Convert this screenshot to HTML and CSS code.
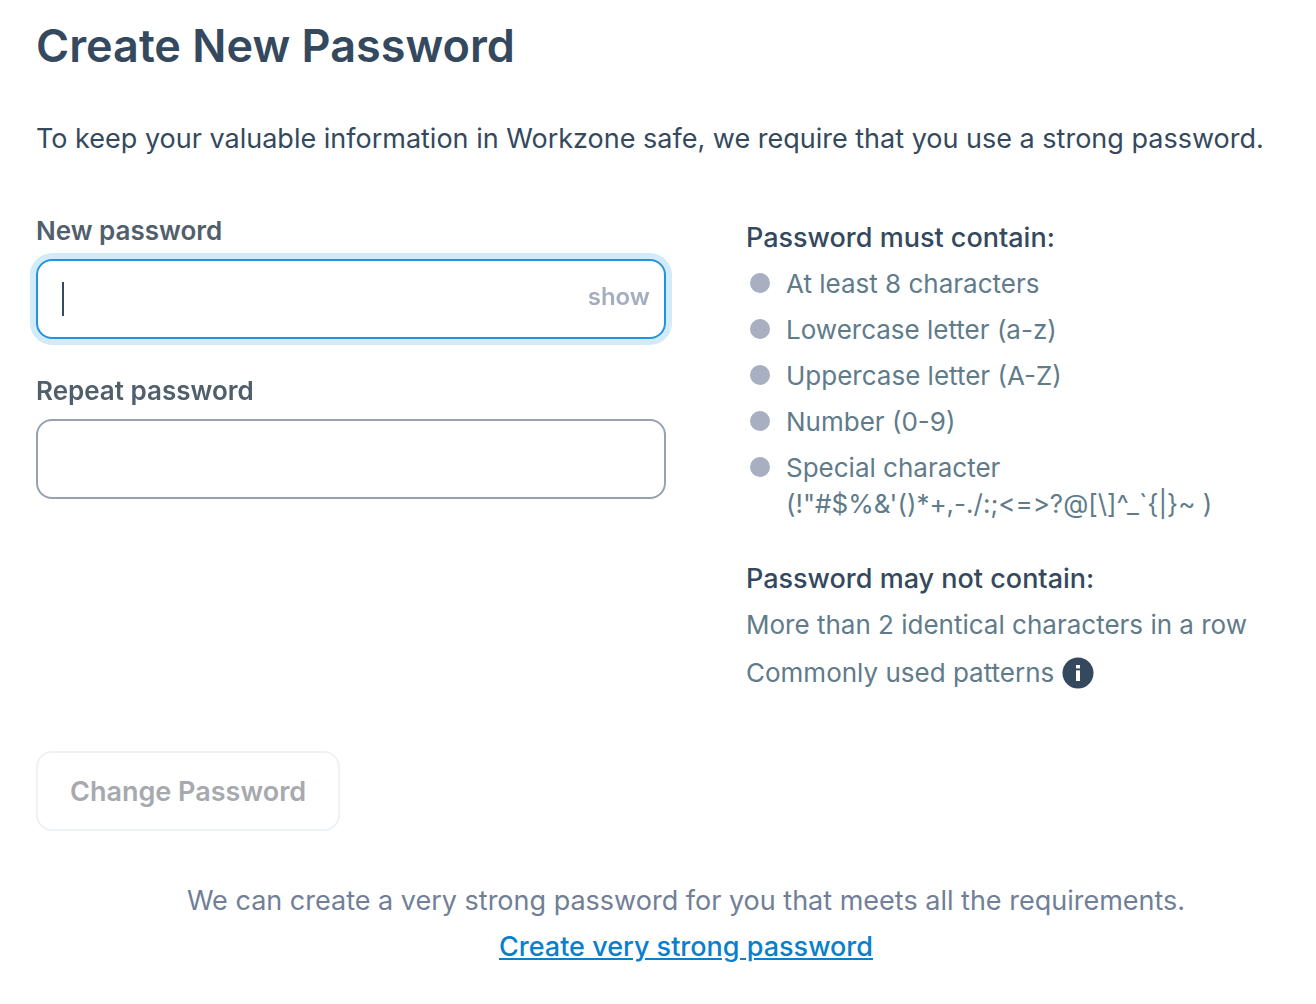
FILE: index.html
```html
<!DOCTYPE html>
<html lang="en">

<head>
    <meta charset="UTF-8">
    <meta name="viewport" content="width=device-width, initial-scale=1.0">
    <title>Create New Password</title>
    <link rel="stylesheet" href="styles.css">
</head>

<body>
    <main class="page">
        <h1>Create New Password</h1>
        <p class="intro">To keep your valuable information in Workzone safe, we require that you use a strong password.</p>

        <form class="password-form">
            <div class="columns">
                <div class="fields">
                    <div class="field">
                        <label for="newPassword">New password</label>
                        <div class="input-box">
                            <input type="password" id="newPassword" placeholder=" " autocomplete="new-password" autofocus>
                            <button type="button" id="showBtn" class="show-btn">show</button>
                        </div>
                    </div>
                    <div class="field">
                        <label for="repeatPassword">Repeat password</label>
                        <div class="input-box">
                            <input type="password" id="repeatPassword" placeholder=" " autocomplete="new-password">
                        </div>
                    </div>
                </div>

                <div class="rules">
                    <h2>Password must contain:</h2>
                    <ul class="must">
                        <li><span>At least 8 characters</span></li>
                        <li><span>Lowercase letter (a-z)</span></li>
                        <li><span>Uppercase letter (A-Z)</span></li>
                        <li><span>Number (0-9)</span></li>
                        <li><span>Special character<br><span class="symbols">(!"#$%&amp;'()*+,-./:;&lt;=&gt;?@[\]^_`{|}~ )</span></span></li>
                    </ul>
                    <h2>Password may not contain:</h2>
                    <ul class="must-not">
                        <li>More than 2 identical characters in a row</li>
                        <li class="patterns">Commonly used patterns
                            <svg class="info" viewBox="0 0 32 32" aria-hidden="true">
                                <circle cx="16" cy="16" r="15.5" />
                                <rect x="14" y="8" width="4" height="3.4" />
                                <rect x="14" y="13.4" width="4" height="10.6" />
                            </svg>
                        </li>
                    </ul>
                </div>
            </div>

            <button type="submit" class="submit-btn" disabled>Change Password</button>
        </form>

        <div class="suggest">
            <p>We can create a very strong password for you that meets all the requirements.</p>
            <a href="#">Create very strong password</a>
        </div>
    </main>

    <script>
document.getElementById('showBtn').addEventListener('click', function() {
    const input = document.getElementById('newPassword');
    const hidden = input.type === 'password';
    input.type = hidden ? 'text' : 'password';
    this.textContent = hidden ? 'hide' : 'show';
});
    </script>
</body>

</html>
```

FILE: styles.css
```css
* {
    box-sizing: border-box;
}

body {
    margin: 0;
    background: #fff;
    color: #34495e;
    font-family: Inter, "Liberation Sans", sans-serif;
    font-size: 26px;
}

h1, h2, p, ul {
    margin: 0;
    padding: 0;
}

.page {
    padding: 16px 36px 32px;
}

h1 {
    font-size: 45px;
    line-height: 60px;
    font-weight: 600;
}

.intro {
    margin-top: 45px;
    font-size: 27px;
    line-height: 36px;
}

.columns {
    display: grid;
    grid-template-columns: 630fr 534fr;
    gap: 80px;
    margin-top: 56px;
}

.field {
    margin-bottom: 34px;
}

.field label {
    display: block;
    margin-bottom: 10px;
    color: #515f6c;
    font-size: 26px;
    line-height: 36px;
    font-weight: 600;
}

.input-box {
    display: flex;
    align-items: center;
    height: 80px;
    padding: 0 14px 0 24px;
    border: 2px solid #98a2ae;
    border-radius: 16px;
}

.input-box:focus-within {
    border-color: #1f94e0;
    box-shadow: 0 0 0 6px #d3eaf8;
}

.input-box input {
    flex: 1;
    min-width: 0;
    height: 34px;
    padding: 0;
    border: 0;
    outline: 0;
    background: none;
    color: #34495e;
    font: inherit;
}

/* Steady caret while the field is empty */
.input-box input:focus:placeholder-shown {
    caret-color: transparent;
    background: linear-gradient(#34495e, #34495e) no-repeat left center / 2px 100%;
}

.show-btn {
    padding: 0 0 6px;
    border: 0;
    background: none;
    color: #a5aec0;
    font: inherit;
    font-size: 24px;
    font-weight: 600;
    cursor: pointer;
}

.rules {
    padding-top: 7px;
    color: #607b8a;
    line-height: 36px;
}

.rules h2 {
    color: #34495e;
    font-size: 27px;
    line-height: 36px;
    font-weight: 500;
}

.rules ul {
    list-style: none;
}

.rules li {
    margin-top: 10px;
}

.must {
    margin-bottom: 39px;
}

.must li {
    display: grid;
    grid-template-columns: 20px 1fr;
    column-gap: 16px;
    padding-left: 4px;
}

.must li::before {
    content: "";
    width: 20px;
    height: 20px;
    margin-top: 7px;
    border-radius: 50%;
    background: #a7afc1;
}

/* Stops "<=>" turning into an arrow */
.symbols {
    font-variant-ligatures: none;
}

.rules .patterns {
    display: flex;
    align-items: center;
    gap: 8px;
    margin-top: 12px;
}

.info {
    width: 32px;
    height: 32px;
    fill: #34495e;
}

.info rect {
    fill: #fff;
}

.submit-btn {
    margin-top: 60px;
    height: 80px;
    padding: 0 32px;
    border: 2px solid #eef2f5;
    border-radius: 16px;
    background: #fff;
    color: #a6a9ad;
    font: inherit;
    font-size: 27px;
    font-weight: 600;
}

.suggest {
    margin-top: 52px;
    padding-left: 56px;
    color: #718096;
    font-size: 27px;
    line-height: 36px;
    text-align: center;
}

.suggest a {
    display: inline-block;
    margin-top: 10px;
    color: #0a80cc;
    font-weight: 500;
}
```
